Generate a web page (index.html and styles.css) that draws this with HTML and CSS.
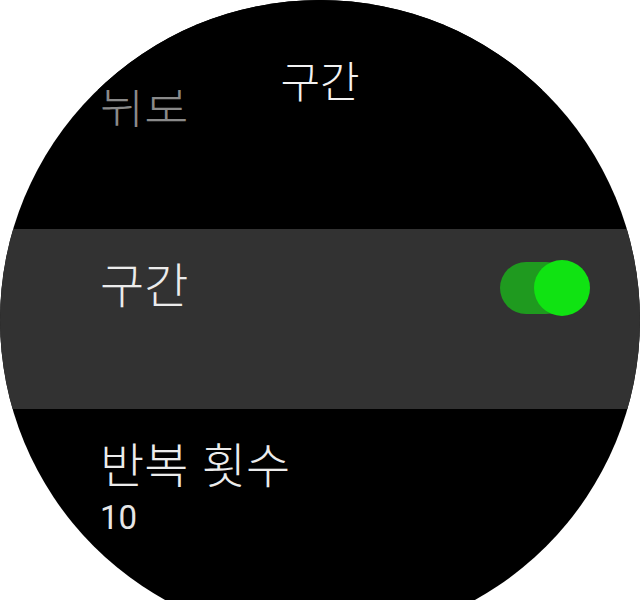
FILE: index.html
```html
<!DOCTYPE html>
<html lang="ko">
<head>
<meta charset="utf-8">
<link rel="stylesheet" href="styles.css">
</head>
<body>
<div class="screen">
  <div class="watch">
    <div class="header"><span class="title">구간</span></div>
    <div class="list">
      <div class="row dim"><span class="label">뒤로</span></div>
      <div class="row active">
        <span class="label">구간</span>
        <div class="toggle"><div class="track"></div><div class="knob"></div></div>
      </div>
      <div class="row">
        <div class="stack">
          <span class="label">반복 횟수</span>
          <span class="value">10</span>
        </div>
      </div>
    </div>
  </div>
</div>
</body>
</html>
```

FILE: styles.css
```css
html, body {
  margin: 0;
  padding: 0;
  background: #ffffff;
}
.screen {
  width: 640px;
  height: 600px;
  overflow: hidden;
}
.watch {
  position: relative;
  width: 640px;
  height: 640px;
  border-radius: 50%;
  background: #000000;
  overflow: hidden;
  font-family: "Noto Sans CJK KR", "Noto Sans", sans-serif;
  font-weight: 300;
  color: #ececec;
}
.header {
  position: absolute;
  top: 0;
  left: 0;
  right: 0;
  height: 90px;
  background: #000000;
  z-index: 2;
  text-align: center;
}
.title {
  display: block;
  padding-top: 48px;
  font-size: 43px;
  line-height: normal;
  color: #f2f2f2;
}
.list {
  padding-top: 49px;
}
.row {
  height: 180px;
  box-sizing: border-box;
  padding: 18px 50px 0 100px;
  display: flex;
  justify-content: space-between;
  align-items: flex-start;
}
.row.active {
  background: #323232;
}
.label {
  font-size: 48px;
  line-height: normal;
}
.dim .label {
  color: #8a8a8a;
}
.stack {
  display: flex;
  flex-direction: column;
}
.value {
  font-family: Roboto, "Liberation Sans", sans-serif;
  font-weight: 400;
  font-size: 33px;
  line-height: normal;
  margin-top: 1px;
  color: #e6e6e6;
}
.toggle {
  position: relative;
  width: 90px;
  height: 56px;
  margin-top: 13px;
}
.track {
  width: 72px;
  height: 52px;
  margin-top: 2px;
  border-radius: 26px;
  background: #1f9a1f;
}
.knob {
  position: absolute;
  right: 0;
  top: 0;
  width: 56px;
  height: 56px;
  border-radius: 50%;
  background: #10e312;
}
```
